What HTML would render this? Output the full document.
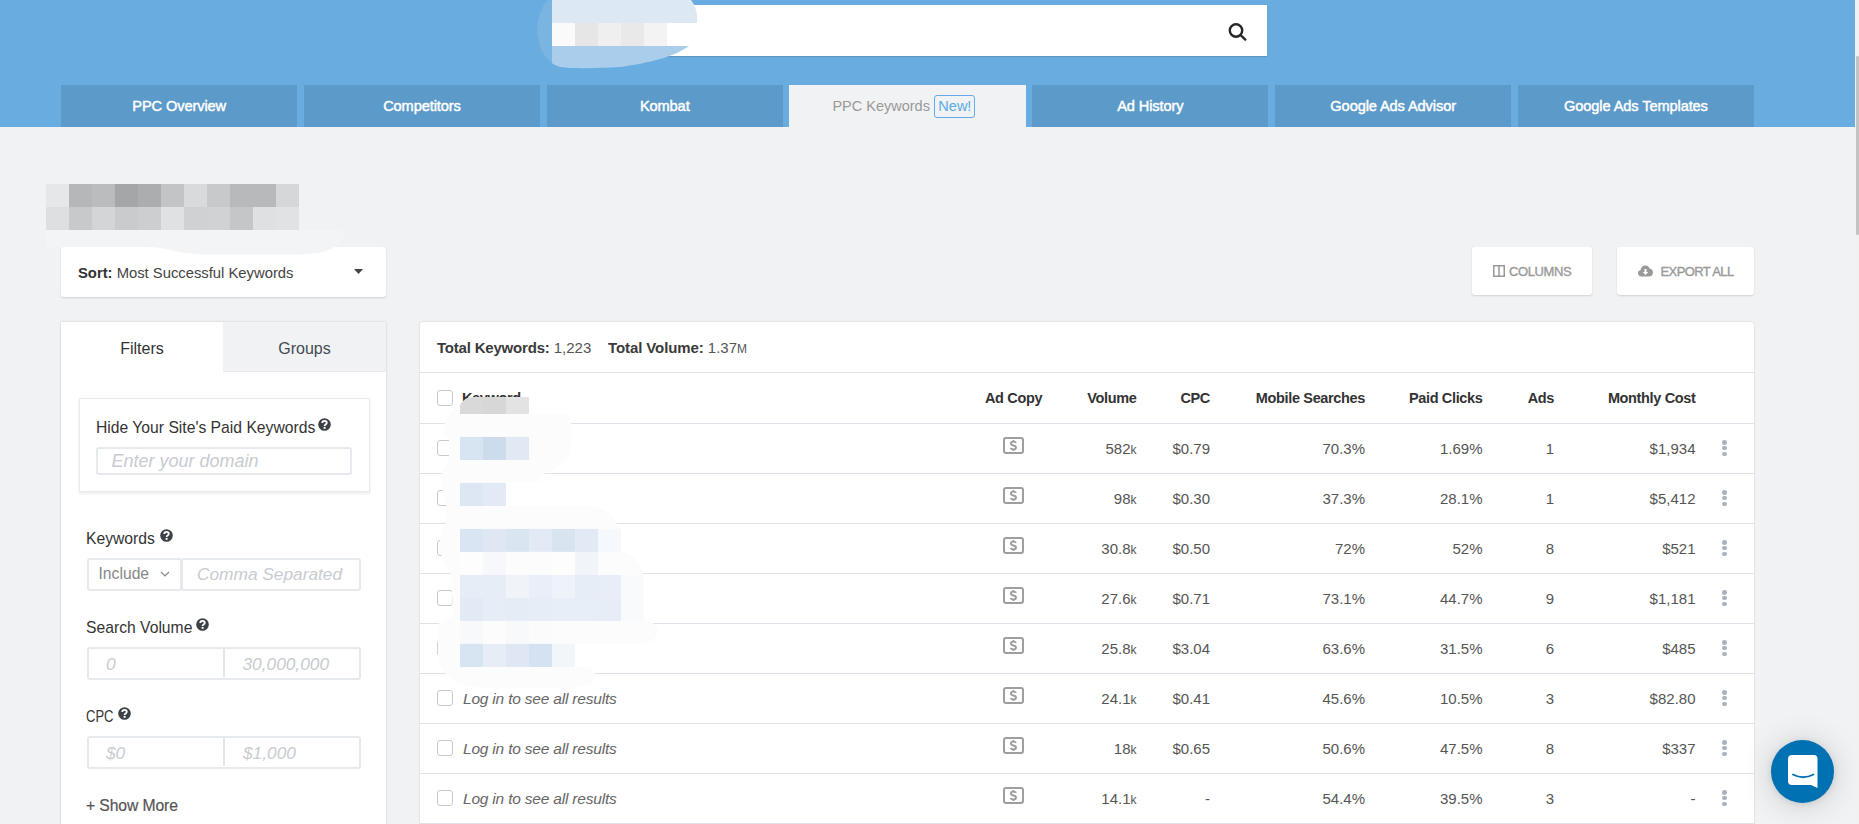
<!DOCTYPE html>
<html><head><meta charset="utf-8">
<style>
*{box-sizing:border-box;margin:0;padding:0}
html,body{width:1859px;height:824px;overflow:hidden;background:#f1f2f4;font-family:"Liberation Sans",sans-serif;color:#333}
.abs{position:absolute}
#hdr{position:absolute;left:0;top:0;width:1855px;height:127px;background:#69acdf}
#sb{position:absolute;left:1855px;top:0;width:4px;height:824px;background:#f1f1f1}
#sbt{position:absolute;left:1856px;top:56px;width:3px;height:179px;background:#c3c3c3;border-radius:1px}
#search{position:absolute;left:552px;top:5px;width:715px;height:51px;background:#fff;box-shadow:0 1px 1px rgba(0,0,0,.12)}
.tab{position:absolute;top:85px;height:42px;width:236.3px;background:#5c9ac9;color:#fff;font-size:14.6px;letter-spacing:-0.1px;font-weight:normal;-webkit-text-stroke:0.45px #fff;text-align:center;line-height:42px}
.tab.act{background:#f1f2f4;color:#999;font-weight:normal;-webkit-text-stroke:0}
.new{display:inline-block;border:1px solid #62abea;color:#5aa9e6;border-radius:3px;font-size:14.5px;line-height:21px;height:23px;padding:0 3px;margin-left:6px;vertical-align:top;margin-top:10px}
.card{position:absolute;background:#fff;border-radius:3px;box-shadow:0 1px 2px rgba(0,0,0,.14)}
.btn{color:#999;font-size:13px;font-weight:normal;-webkit-text-stroke:0.35px #999;line-height:48px}
.panel{position:absolute;background:#fff;box-shadow:0 0 2px rgba(0,0,0,.18)}
.lbl{position:absolute;font-size:15.7px;color:#333;white-space:nowrap}
.q{display:inline-block;position:absolute;width:13px;height:13px;border-radius:50%;background:#3a4047;color:#fff;font-size:10px;font-weight:bold;text-align:center;line-height:13px}
.inp{position:absolute;border:2px solid #e6e9ed;border-radius:3px;background:#fff}
.ph{position:absolute;font-style:italic;color:#c8cbd0;font-size:17.3px;white-space:nowrap}
.line{position:absolute;left:420px;width:1334px;height:1px;background:#dfe3e9}
.cb{position:absolute;left:437px;width:16px;height:16px;border:1px solid #c9c9c9;border-radius:3px;background:#fff}
.th{position:absolute;top:390px;font-size:14.5px;letter-spacing:-0.35px;font-weight:bold;color:#333;white-space:nowrap}
.td{position:absolute;font-size:15px;color:#555;white-space:nowrap;text-align:right}
.sm{font-size:12px}
.dots{position:absolute;left:1722px;width:5px}
.dots i{display:block;width:4.6px;height:4.6px;border-radius:50%;background:#a9b3bd;margin-bottom:1.3px}
.adc{position:absolute;left:1003px;width:21px;height:17px;border:2px solid #a0a0a0;border-radius:3px}
.adc b{position:absolute;left:0;right:0;top:-1px;text-align:center;font-size:12px;color:#a0a0a0;font-weight:bold;line-height:14px}
.login{position:absolute;left:463px;font-style:italic;color:#666;font-size:15.5px;letter-spacing:-0.2px;white-space:nowrap}
</style></head><body>
<div id="hdr"></div>
<div id="search"></div>
<svg class="abs" style="left:1226px;top:20px" width="24" height="24" viewBox="0 0 24 24"><circle cx="10" cy="10.5" r="6.2" fill="none" stroke="#262626" stroke-width="2.4"/><line x1="14.5" y1="15" x2="19.3" y2="19.6" stroke="#262626" stroke-width="2.4" stroke-linecap="round"/></svg>

<div class="tab" style="left:61px">PPC Overview</div>
<div class="tab" style="left:303.8px">Competitors</div>
<div class="tab" style="left:546.6px">Kombat</div>
<div class="tab act" style="left:789.4px"><span class="abs" style="left:43px;top:0;font-size:14.5px;letter-spacing:0">PPC Keywords</span><span class="new abs" style="left:145px;top:10px;width:41px;margin:0;padding:0;text-align:center;letter-spacing:0">New!</span></div>
<div class="tab" style="left:1032.2px">Ad History</div>
<div class="tab" style="left:1275px">Google Ads Advisor</div>
<div class="tab" style="left:1517.8px">Google Ads Templates</div>


<!-- search blob -->
<svg class="abs" style="left:0;top:0" width="760" height="80">
<defs><clipPath id="bl"><path d="M548 0 L691 0 Q698 8 697 23 L689 46 C676 56 650 63 620 67 C600 68 575 69 560 67 C546 63 538 48 537 30 C537 18 542 6 548 0 Z"/></clipPath></defs>
<g clip-path="url(#bl)">
<rect x="530" y="0" width="22" height="80" fill="#7ab4e1"/>
<rect x="552" y="0" width="150" height="23" fill="#dce9f5"/>
<rect x="552" y="23" width="23" height="23" fill="#fafafa"/>
<rect x="575" y="23" width="23" height="23" fill="#e6e6e6"/>
<rect x="598" y="23" width="23" height="23" fill="#efefef"/>
<rect x="621" y="23" width="23" height="23" fill="#e9e9e9"/>
<rect x="644" y="23" width="23" height="23" fill="#f3f3f3"/>
<rect x="667" y="23" width="40" height="23" fill="#ffffff"/>
<rect x="552" y="46" width="150" height="30" fill="#a9cdea"/>
</g></svg>

<!-- title blur -->
<svg class="abs" style="left:46px;top:184px" width="253" height="46">
<rect x="0" y="0" width="23" height="23" fill="#e6e7e9"/><rect x="23" y="0" width="23" height="23" fill="#b6b7b9"/><rect x="46" y="0" width="23" height="23" fill="#bbbcbe"/><rect x="69" y="0" width="23" height="23" fill="#a5a6a8"/><rect x="92" y="0" width="23" height="23" fill="#acadaf"/><rect x="115" y="0" width="23" height="23" fill="#c3c4c6"/><rect x="138" y="0" width="23" height="23" fill="#d9dadc"/><rect x="161" y="0" width="23" height="23" fill="#c8c9cb"/><rect x="184" y="0" width="46" height="23" fill="#b8b9bb"/><rect x="230" y="0" width="23" height="23" fill="#d6d7d9"/>
<rect x="0" y="23" width="23" height="23" fill="#dedfe1"/><rect x="23" y="23" width="23" height="23" fill="#c8c9cb"/><rect x="46" y="23" width="23" height="23" fill="#d4d5d7"/><rect x="69" y="23" width="23" height="23" fill="#cacbcd"/><rect x="92" y="23" width="23" height="23" fill="#cdced0"/><rect x="115" y="23" width="23" height="23" fill="#e0e1e3"/><rect x="138" y="23" width="23" height="23" fill="#d0d1d3"/><rect x="161" y="23" width="23" height="23" fill="#d1d2d4"/><rect x="184" y="23" width="23" height="23" fill="#c5c6c8"/><rect x="207" y="23" width="23" height="23" fill="#dfe0e2"/><rect x="230" y="23" width="23" height="23" fill="#e1e2e4"/>
</svg>

<!-- sort -->
<div class="card" style="left:61px;top:247px;width:325px;height:50px">
<div class="abs" style="left:17px;top:1px;line-height:50px;font-size:14.8px;color:#444;white-space:nowrap"><b style="color:#333">Sort:</b> Most Successful Keywords</div>
<svg class="abs" style="left:293px;top:22px" width="10" height="6"><path d="M0 0 L9 0 L4.5 5 Z" fill="#444"/></svg>
</div>

<svg class="abs" style="left:0;top:0" width="400" height="300"><path d="M46 230 L340 230 Q346 232 343 238 Q336 250 318 253 L300 254.5 L200 254.5 Q185 254 170 250 Q158 247 148 247 L46 247 Z" fill="#f3f4f5"/></svg>
<!-- buttons -->
<div class="card btn" style="left:1472px;top:247px;width:120px;height:48px">
<svg class="abs" style="left:21px;top:18px" width="12" height="12"><rect x="0.75" y="0.75" width="10.5" height="10.5" fill="none" stroke="#999" stroke-width="1.5"/><line x1="6" y1="1" x2="6" y2="11" stroke="#999" stroke-width="1.5"/></svg>
<span class="abs" style="left:37px;top:1px;letter-spacing:-0.4px">COLUMNS</span></div>
<div class="card btn" style="left:1617px;top:247px;width:137px;height:48px">
<svg class="abs" style="left:21px;top:18px" width="15" height="12" viewBox="0 0 15 12"><path d="M3.5 11.5 C1.5 11.5 0 10 0 8.2 C0 6.6 1.1 5.3 2.6 5 C2.8 2.6 4.8 0.5 7.3 0.5 C9.3 0.5 11 1.8 11.6 3.6 C13.5 3.8 15 5.4 15 7.4 C15 9.7 13.2 11.5 11 11.5 Z" fill="#999"/><path d="M6.5 4 L8.5 4 L8.5 7 L10.3 7 L7.5 10 L4.7 7 L6.5 7 Z" fill="#fff"/></svg>
<span class="abs" style="left:43.5px;top:1px;letter-spacing:-0.6px">EXPORT ALL</span></div>

<!-- left panel -->
<div class="panel" style="left:61px;top:322px;width:325px;height:520px">
<div class="abs" style="left:0;top:2px;width:162px;height:48px;text-align:center;line-height:50px;font-size:16px;color:#333">Filters</div>
<div class="abs" style="left:162px;top:0;width:163px;height:50px;background:#f1f2f4;border-bottom:1px solid #e8eaed"></div>
<div class="abs" style="left:162px;top:2px;width:163px;height:48px;text-align:center;line-height:50px;font-size:16px;color:#434a52">Groups</div>
</div>
<div class="abs" style="left:78.5px;top:398px;width:291px;height:94px;background:#fff;border:1px solid #e9e9e9;box-shadow:0 2px 3px rgba(0,0,0,.08)"></div>
<div class="lbl" style="left:96px;top:419px">Hide Your Site's Paid Keywords</div>
<svg class="abs" style="left:318px;top:417.5px" width="13" height="13" viewBox="0 0 13 13"><circle cx="6.5" cy="6.5" r="6.3" fill="#3b4147"/><path d="M4.3 5.1 Q4.3 2.9 6.5 2.9 Q8.7 2.9 8.7 4.8 Q8.7 5.9 7.6 6.5 Q6.6 7 6.6 8.1" fill="none" stroke="#fff" stroke-width="1.9"/><rect x="5.6" y="8.9" width="2" height="1.9" fill="#fff"/></svg>
<div class="inp" style="left:95.5px;top:446.5px;width:256px;height:28px"></div>
<div class="ph" style="left:111.5px;top:451px;font-size:18px">Enter your domain</div>

<div class="lbl" style="left:86px;top:530px">Keywords</div>
<svg class="abs" style="left:159.5px;top:528.5px" width="13" height="13" viewBox="0 0 13 13"><circle cx="6.5" cy="6.5" r="6.3" fill="#3b4147"/><path d="M4.3 5.1 Q4.3 2.9 6.5 2.9 Q8.7 2.9 8.7 4.8 Q8.7 5.9 7.6 6.5 Q6.6 7 6.6 8.1" fill="none" stroke="#fff" stroke-width="1.9"/><rect x="5.6" y="8.9" width="2" height="1.9" fill="#fff"/></svg>
<div class="inp" style="left:86.5px;top:557.5px;width:95px;height:33px"></div>
<div class="abs" style="left:98.5px;top:565px;font-size:15.7px;color:#888;white-space:nowrap">Include</div>
<svg class="abs" style="left:160px;top:571px" width="10" height="6"><path d="M1 1 L5 5 L9 1" fill="none" stroke="#888" stroke-width="1.2"/></svg>
<div class="inp" style="left:181px;top:557.5px;width:180px;height:33px"></div>
<div class="ph" style="left:197px;top:564px">Comma Separated</div>

<div class="lbl" style="left:86px;top:618.5px">Search Volume</div>
<svg class="abs" style="left:196px;top:617.5px" width="13" height="13" viewBox="0 0 13 13"><circle cx="6.5" cy="6.5" r="6.3" fill="#3b4147"/><path d="M4.3 5.1 Q4.3 2.9 6.5 2.9 Q8.7 2.9 8.7 4.8 Q8.7 5.9 7.6 6.5 Q6.6 7 6.6 8.1" fill="none" stroke="#fff" stroke-width="1.9"/><rect x="5.6" y="8.9" width="2" height="1.9" fill="#fff"/></svg>
<div class="inp" style="left:86.5px;top:646.5px;width:274px;height:33px"></div>
<div class="abs" style="left:223px;top:648px;width:1.5px;height:29px;background:#e3e6ea"></div>
<div class="ph" style="left:106px;top:654px">0</div>
<div class="ph" style="left:242.5px;top:654px">30,000,000</div>

<div class="lbl" style="left:86px;top:707.5px;transform:scaleX(0.83);transform-origin:0 0">CPC</div>
<svg class="abs" style="left:118px;top:706.5px" width="13" height="13" viewBox="0 0 13 13"><circle cx="6.5" cy="6.5" r="6.3" fill="#3b4147"/><path d="M4.3 5.1 Q4.3 2.9 6.5 2.9 Q8.7 2.9 8.7 4.8 Q8.7 5.9 7.6 6.5 Q6.6 7 6.6 8.1" fill="none" stroke="#fff" stroke-width="1.9"/><rect x="5.6" y="8.9" width="2" height="1.9" fill="#fff"/></svg>
<div class="inp" style="left:86.5px;top:735.5px;width:274px;height:33px"></div>
<div class="abs" style="left:223px;top:737px;width:1.5px;height:29px;background:#e3e6ea"></div>
<div class="ph" style="left:106px;top:743px">$0</div>
<div class="ph" style="left:243px;top:743px">$1,000</div>

<div class="lbl" style="left:86px;top:797px;color:#555;-webkit-text-stroke:0.2px #555;letter-spacing:-0.1px">+ Show More</div>

<!-- table panel -->
<div class="panel" style="left:420px;top:322px;width:1334px;height:520px;border-radius:3px 3px 0 0"></div>
<div class="abs" style="left:437px;top:339px;font-size:15px;color:#555;white-space:nowrap"><b style="color:#3a3a3a;letter-spacing:-0.2px">Total Keywords:</b> 1,223</div>
<div class="abs" style="left:608px;top:339px;font-size:15px;color:#555;white-space:nowrap"><b style="color:#3a3a3a;letter-spacing:-0.1px">Total Volume:</b> 1.37<span class="sm">M</span></div>

<div class="line" style="top:372px"></div>
<div class="line" style="top:423px"></div>
<div class="line" style="top:473px"></div>
<div class="line" style="top:523px"></div>
<div class="line" style="top:573px"></div>
<div class="line" style="top:623px"></div>
<div class="line" style="top:673px"></div>
<div class="line" style="top:723px"></div>
<div class="line" style="top:773px"></div>
<div class="line" style="top:823px"></div>
<div class="cb" style="top:390px"></div>
<div class="th" style="left:462px">Keyword</div>
<div class="th" style="left:985px">Ad Copy</div>
<div class="th" style="right:722.5px">Volume</div>
<div class="th" style="right:649px">CPC</div>
<div class="th" style="right:494px">Mobile Searches</div>
<div class="th" style="right:376.5px">Paid Clicks</div>
<div class="th" style="right:305px">Ads</div>
<div class="th" style="right:163.5px">Monthly Cost</div>
<div class="cb" style="top:440px"></div>
<svg class="abs" style="left:1003px;top:437px" width="21" height="17" viewBox="0 0 21 17"><rect x="1" y="1" width="19" height="15" rx="2" fill="none" stroke="#9e9e9e" stroke-width="2"/><path d="M13 5.9 Q12.6 4.6 10.4 4.6 Q7.9 4.6 7.9 6.6 Q7.9 8 10.4 8.5 Q13 9 13 10.6 Q13 12.5 10.4 12.5 Q8 12.5 7.6 11.1 M10.4 3 V4.6 M10.4 12.5 V14" fill="none" stroke="#9e9e9e" stroke-width="1.9"/></svg>
<div class="td" style="right:722.5px;top:439.5px">582<span class="sm">k</span></div>
<div class="td" style="right:649px;top:439.5px">$0.79</div>
<div class="td" style="right:494px;top:439.5px">70.3%</div>
<div class="td" style="right:376.5px;top:439.5px">1.69%</div>
<div class="td" style="right:305px;top:439.5px">1</div>
<div class="td" style="right:163.5px;top:439.5px">$1,934</div>
<div class="dots" style="top:440px"><i></i><i></i><i></i></div>
<div class="cb" style="top:490px"></div>
<svg class="abs" style="left:1003px;top:487px" width="21" height="17" viewBox="0 0 21 17"><rect x="1" y="1" width="19" height="15" rx="2" fill="none" stroke="#9e9e9e" stroke-width="2"/><path d="M13 5.9 Q12.6 4.6 10.4 4.6 Q7.9 4.6 7.9 6.6 Q7.9 8 10.4 8.5 Q13 9 13 10.6 Q13 12.5 10.4 12.5 Q8 12.5 7.6 11.1 M10.4 3 V4.6 M10.4 12.5 V14" fill="none" stroke="#9e9e9e" stroke-width="1.9"/></svg>
<div class="td" style="right:722.5px;top:489.5px">98<span class="sm">k</span></div>
<div class="td" style="right:649px;top:489.5px">$0.30</div>
<div class="td" style="right:494px;top:489.5px">37.3%</div>
<div class="td" style="right:376.5px;top:489.5px">28.1%</div>
<div class="td" style="right:305px;top:489.5px">1</div>
<div class="td" style="right:163.5px;top:489.5px">$5,412</div>
<div class="dots" style="top:490px"><i></i><i></i><i></i></div>
<div class="cb" style="top:540px"></div>
<svg class="abs" style="left:1003px;top:537px" width="21" height="17" viewBox="0 0 21 17"><rect x="1" y="1" width="19" height="15" rx="2" fill="none" stroke="#9e9e9e" stroke-width="2"/><path d="M13 5.9 Q12.6 4.6 10.4 4.6 Q7.9 4.6 7.9 6.6 Q7.9 8 10.4 8.5 Q13 9 13 10.6 Q13 12.5 10.4 12.5 Q8 12.5 7.6 11.1 M10.4 3 V4.6 M10.4 12.5 V14" fill="none" stroke="#9e9e9e" stroke-width="1.9"/></svg>
<div class="td" style="right:722.5px;top:539.5px">30.8<span class="sm">k</span></div>
<div class="td" style="right:649px;top:539.5px">$0.50</div>
<div class="td" style="right:494px;top:539.5px">72%</div>
<div class="td" style="right:376.5px;top:539.5px">52%</div>
<div class="td" style="right:305px;top:539.5px">8</div>
<div class="td" style="right:163.5px;top:539.5px">$521</div>
<div class="dots" style="top:540px"><i></i><i></i><i></i></div>
<div class="cb" style="top:590px"></div>
<svg class="abs" style="left:1003px;top:587px" width="21" height="17" viewBox="0 0 21 17"><rect x="1" y="1" width="19" height="15" rx="2" fill="none" stroke="#9e9e9e" stroke-width="2"/><path d="M13 5.9 Q12.6 4.6 10.4 4.6 Q7.9 4.6 7.9 6.6 Q7.9 8 10.4 8.5 Q13 9 13 10.6 Q13 12.5 10.4 12.5 Q8 12.5 7.6 11.1 M10.4 3 V4.6 M10.4 12.5 V14" fill="none" stroke="#9e9e9e" stroke-width="1.9"/></svg>
<div class="td" style="right:722.5px;top:589.5px">27.6<span class="sm">k</span></div>
<div class="td" style="right:649px;top:589.5px">$0.71</div>
<div class="td" style="right:494px;top:589.5px">73.1%</div>
<div class="td" style="right:376.5px;top:589.5px">44.7%</div>
<div class="td" style="right:305px;top:589.5px">9</div>
<div class="td" style="right:163.5px;top:589.5px">$1,181</div>
<div class="dots" style="top:590px"><i></i><i></i><i></i></div>
<div class="cb" style="top:640px"></div>
<svg class="abs" style="left:1003px;top:637px" width="21" height="17" viewBox="0 0 21 17"><rect x="1" y="1" width="19" height="15" rx="2" fill="none" stroke="#9e9e9e" stroke-width="2"/><path d="M13 5.9 Q12.6 4.6 10.4 4.6 Q7.9 4.6 7.9 6.6 Q7.9 8 10.4 8.5 Q13 9 13 10.6 Q13 12.5 10.4 12.5 Q8 12.5 7.6 11.1 M10.4 3 V4.6 M10.4 12.5 V14" fill="none" stroke="#9e9e9e" stroke-width="1.9"/></svg>
<div class="td" style="right:722.5px;top:639.5px">25.8<span class="sm">k</span></div>
<div class="td" style="right:649px;top:639.5px">$3.04</div>
<div class="td" style="right:494px;top:639.5px">63.6%</div>
<div class="td" style="right:376.5px;top:639.5px">31.5%</div>
<div class="td" style="right:305px;top:639.5px">6</div>
<div class="td" style="right:163.5px;top:639.5px">$485</div>
<div class="dots" style="top:640px"><i></i><i></i><i></i></div>
<div class="cb" style="top:690px"></div>
<div class="login" style="top:690px">Log in to see all results</div>
<svg class="abs" style="left:1003px;top:687px" width="21" height="17" viewBox="0 0 21 17"><rect x="1" y="1" width="19" height="15" rx="2" fill="none" stroke="#9e9e9e" stroke-width="2"/><path d="M13 5.9 Q12.6 4.6 10.4 4.6 Q7.9 4.6 7.9 6.6 Q7.9 8 10.4 8.5 Q13 9 13 10.6 Q13 12.5 10.4 12.5 Q8 12.5 7.6 11.1 M10.4 3 V4.6 M10.4 12.5 V14" fill="none" stroke="#9e9e9e" stroke-width="1.9"/></svg>
<div class="td" style="right:722.5px;top:689.5px">24.1<span class="sm">k</span></div>
<div class="td" style="right:649px;top:689.5px">$0.41</div>
<div class="td" style="right:494px;top:689.5px">45.6%</div>
<div class="td" style="right:376.5px;top:689.5px">10.5%</div>
<div class="td" style="right:305px;top:689.5px">3</div>
<div class="td" style="right:163.5px;top:689.5px">$82.80</div>
<div class="dots" style="top:690px"><i></i><i></i><i></i></div>
<div class="cb" style="top:740px"></div>
<div class="login" style="top:740px">Log in to see all results</div>
<svg class="abs" style="left:1003px;top:737px" width="21" height="17" viewBox="0 0 21 17"><rect x="1" y="1" width="19" height="15" rx="2" fill="none" stroke="#9e9e9e" stroke-width="2"/><path d="M13 5.9 Q12.6 4.6 10.4 4.6 Q7.9 4.6 7.9 6.6 Q7.9 8 10.4 8.5 Q13 9 13 10.6 Q13 12.5 10.4 12.5 Q8 12.5 7.6 11.1 M10.4 3 V4.6 M10.4 12.5 V14" fill="none" stroke="#9e9e9e" stroke-width="1.9"/></svg>
<div class="td" style="right:722.5px;top:739.5px">18<span class="sm">k</span></div>
<div class="td" style="right:649px;top:739.5px">$0.65</div>
<div class="td" style="right:494px;top:739.5px">50.6%</div>
<div class="td" style="right:376.5px;top:739.5px">47.5%</div>
<div class="td" style="right:305px;top:739.5px">8</div>
<div class="td" style="right:163.5px;top:739.5px">$337</div>
<div class="dots" style="top:740px"><i></i><i></i><i></i></div>
<div class="cb" style="top:790px"></div>
<div class="login" style="top:790px">Log in to see all results</div>
<svg class="abs" style="left:1003px;top:787px" width="21" height="17" viewBox="0 0 21 17"><rect x="1" y="1" width="19" height="15" rx="2" fill="none" stroke="#9e9e9e" stroke-width="2"/><path d="M13 5.9 Q12.6 4.6 10.4 4.6 Q7.9 4.6 7.9 6.6 Q7.9 8 10.4 8.5 Q13 9 13 10.6 Q13 12.5 10.4 12.5 Q8 12.5 7.6 11.1 M10.4 3 V4.6 M10.4 12.5 V14" fill="none" stroke="#9e9e9e" stroke-width="1.9"/></svg>
<div class="td" style="right:722.5px;top:789.5px">14.1<span class="sm">k</span></div>
<div class="td" style="right:649px;top:789.5px">-</div>
<div class="td" style="right:494px;top:789.5px">54.4%</div>
<div class="td" style="right:376.5px;top:789.5px">39.5%</div>
<div class="td" style="right:305px;top:789.5px">3</div>
<div class="td" style="right:163.5px;top:789.5px">-</div>
<div class="dots" style="top:790px"><i></i><i></i><i></i></div>
<svg class="abs" style="left:0;top:0" width="700" height="720" viewBox="0 0 700 720"><defs><clipPath id="kb"><path d="M460 405 Q465 397 473 397 L529 397 L529 413.8 L565 413.8 Q572 416 572 431 Q572 455 565 460 Q558 468 545 473 Q541 478 539 482 L506 482 L506 506 L585 506 Q612 508 616 523 L621 529 L621 551.6 Q640 556 643.5 575 L643.5 620.5 Q658 622 658 632 Q655 643 640 643.8 L575 644 L575 667 L590 667 Q600 676 590 684 Q580 688 566 688 L488 688 Q462 686 456 682 Q438 672 437.8 650 L437.8 624 Q445 621 453 616 Q452 595 451.4 575 Q440 560 439.7 545 Q440 532 446.4 523 L446.4 506 Q441 490 441.8 473 L449 459.6 L449 437 Q443.7 436 443.7 431 Q443.7 415 460 405 Z"/></clipPath></defs><path d="M460 405 Q465 397 473 397 L529 397 L529 413.8 L565 413.8 Q572 416 572 431 Q572 455 565 460 Q558 468 545 473 Q541 478 539 482 L506 482 L506 506 L585 506 Q612 508 616 523 L621 529 L621 551.6 Q640 556 643.5 575 L643.5 620.5 Q658 622 658 632 Q655 643 640 643.8 L575 644 L575 667 L590 667 Q600 676 590 684 Q580 688 566 688 L488 688 Q462 686 456 682 Q438 672 437.8 650 L437.8 624 Q445 621 453 616 Q452 595 451.4 575 Q440 560 439.7 545 Q440 532 446.4 523 L446.4 506 Q441 490 441.8 473 L449 459.6 L449 437 Q443.7 436 443.7 431 Q443.7 415 460 405 Z" fill="#fcfcfc"/><g clip-path="url(#kb)"><rect x="460" y="390.9" width="23.1" height="23.1" fill="#d9d9d9"/><rect x="483" y="390.9" width="23.1" height="23.1" fill="#d7d7d7"/><rect x="506" y="390.9" width="23.1" height="23.1" fill="#e3e3e3"/><rect x="460" y="436.9" width="23.1" height="23.1" fill="#d7e4f2"/><rect x="483" y="436.9" width="23.1" height="23.1" fill="#ccdced"/><rect x="506" y="436.9" width="23.1" height="23.1" fill="#e0e9f4"/><rect x="460" y="482.9" width="23.1" height="23.1" fill="#dce7f3"/><rect x="483" y="482.9" width="23.1" height="23.1" fill="#e1eaf5"/><rect x="460" y="528.9" width="23.1" height="23.1" fill="#d9e5f2"/><rect x="483" y="528.9" width="23.1" height="23.1" fill="#dfe7f3"/><rect x="506" y="528.9" width="23.1" height="23.1" fill="#d9e6f2"/><rect x="529" y="528.9" width="23.1" height="23.1" fill="#e2ebf5"/><rect x="552" y="528.9" width="23.1" height="23.1" fill="#d8e5f1"/><rect x="575" y="528.9" width="23.1" height="23.1" fill="#e2eaf5"/><rect x="598" y="528.9" width="23.1" height="23.1" fill="#f5f9fd"/><rect x="460" y="551.9" width="23.1" height="23.1" fill="#fdfdfe"/><rect x="483" y="551.9" width="23.1" height="23.1" fill="#f6f8fb"/><rect x="506" y="551.9" width="23.1" height="23.1" fill="#fcfcfd"/><rect x="529" y="551.9" width="23.1" height="23.1" fill="#fcfcfd"/><rect x="552" y="551.9" width="23.1" height="23.1" fill="#fdfdfd"/><rect x="575" y="551.9" width="23.1" height="23.1" fill="#f1f5fa"/><rect x="460" y="574.9" width="23.1" height="23.1" fill="#e6edf7"/><rect x="483" y="574.9" width="23.1" height="23.1" fill="#e6edf7"/><rect x="506" y="574.9" width="23.1" height="23.1" fill="#f0f4f9"/><rect x="529" y="574.9" width="23.1" height="23.1" fill="#e8eff8"/><rect x="552" y="574.9" width="23.1" height="23.1" fill="#eef3f9"/><rect x="575" y="574.9" width="23.1" height="23.1" fill="#e6edf7"/><rect x="598" y="574.9" width="23.1" height="23.1" fill="#e8eef7"/><rect x="621" y="574.9" width="23.1" height="23.1" fill="#f9fafc"/><rect x="460" y="597.9" width="23.1" height="23.1" fill="#e2eaf5"/><rect x="483" y="597.9" width="23.1" height="23.1" fill="#e6edf7"/><rect x="506" y="597.9" width="23.1" height="23.1" fill="#e5ecf6"/><rect x="529" y="597.9" width="23.1" height="23.1" fill="#e6edf7"/><rect x="552" y="597.9" width="23.1" height="23.1" fill="#e8eef7"/><rect x="575" y="597.9" width="23.1" height="23.1" fill="#e8eef7"/><rect x="598" y="597.9" width="23.1" height="23.1" fill="#e6edf6"/><rect x="621" y="597.9" width="23.1" height="23.1" fill="#f9fafc"/><rect x="460" y="620.9" width="23.1" height="23.1" fill="#f8f9fb"/><rect x="483" y="620.9" width="23.1" height="23.1" fill="#fcfcfc"/><rect x="506" y="620.9" width="23.1" height="23.1" fill="#f8f9fb"/><rect x="529" y="620.9" width="23.1" height="23.1" fill="#fbfbfb"/><rect x="460" y="643.9" width="23.1" height="23.1" fill="#d7e4f2"/><rect x="483" y="643.9" width="23.1" height="23.1" fill="#e6edf6"/><rect x="506" y="643.9" width="23.1" height="23.1" fill="#dee7f3"/><rect x="529" y="643.9" width="23.1" height="23.1" fill="#d5e2f1"/><rect x="552" y="643.9" width="23.1" height="23.1" fill="#f1f6fb"/></g></svg>
<div class="abs" style="left:1771px;top:740px;width:63px;height:63px;border-radius:50%;background:#0071b2;box-shadow:0 1px 6px rgba(0,0,0,.1),0 2px 32px rgba(0,0,0,.16)"></div>
<svg class="abs" style="left:1786px;top:753px" width="34" height="37" viewBox="0 0 34 37"><path d="M2 6 Q2 2 6 2 L28 2 Q31.5 2 31.5 6 L31.5 35 L25 32 L6 32 Q2 32 2 28 Z" fill="#fff"/><path d="M7 21.5 Q17 27 27.5 21.5" fill="none" stroke="#0071b2" stroke-width="1.8" stroke-linecap="round"/></svg>
<div id="sb"></div><div id="sbt"></div>
</body></html>
